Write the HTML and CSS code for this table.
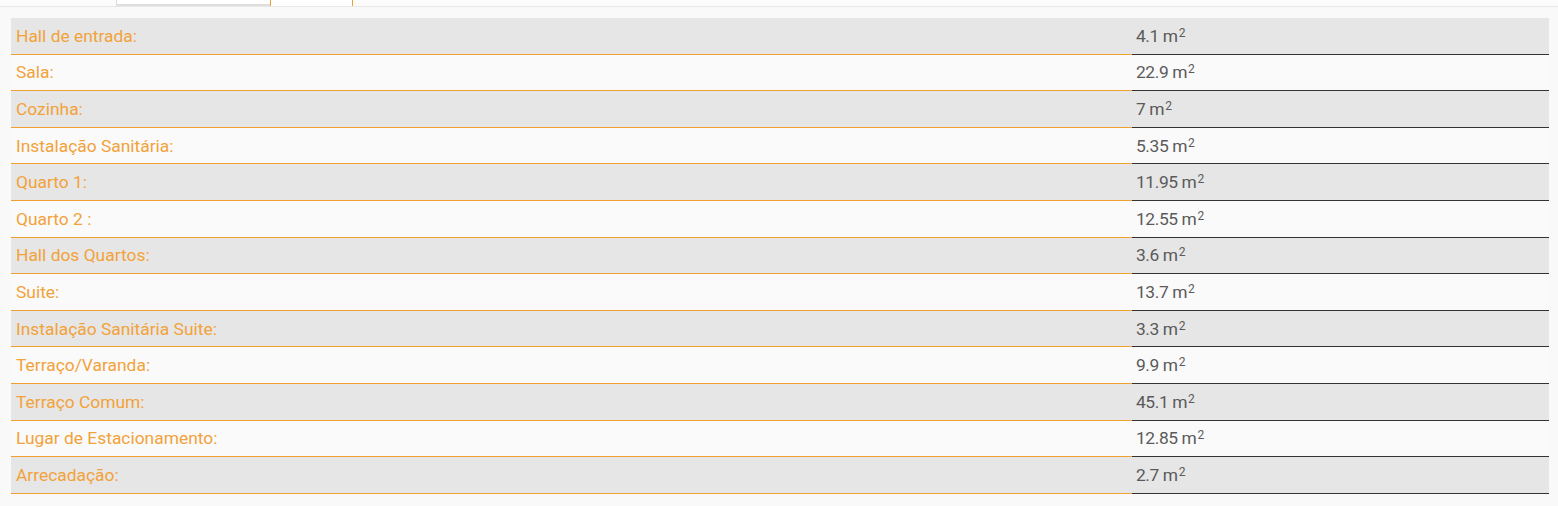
FILE: index.html
```html
<!DOCTYPE html>
<html lang="pt">
<head>
<meta charset="utf-8">
<title>Áreas</title>
<link rel="stylesheet" href="styles.css">
</head>
<body>
<div class="tabs">
  <div class="tab-spacer"></div>
  <div class="tab tab-active"></div>
  <div class="tab tab-orange"></div>
</div>
<div class="areas">
  <div class="row odd"><div class="name">Hall de entrada:</div><div class="val">4.1 m<sup>2</sup></div></div>
  <div class="row"><div class="name">Sala:</div><div class="val">22.9 m<sup>2</sup></div></div>
  <div class="row odd"><div class="name">Cozinha:</div><div class="val">7 m<sup>2</sup></div></div>
  <div class="row"><div class="name">Instalação Sanitária:</div><div class="val">5.35 m<sup>2</sup></div></div>
  <div class="row odd"><div class="name">Quarto 1:</div><div class="val">11.95 m<sup>2</sup></div></div>
  <div class="row"><div class="name">Quarto 2 :</div><div class="val">12.55 m<sup>2</sup></div></div>
  <div class="row odd"><div class="name">Hall dos Quartos:</div><div class="val">3.6 m<sup>2</sup></div></div>
  <div class="row"><div class="name">Suite:</div><div class="val">13.7 m<sup>2</sup></div></div>
  <div class="row odd"><div class="name">Instalação Sanitária Suite:</div><div class="val">3.3 m<sup>2</sup></div></div>
  <div class="row"><div class="name">Terraço/Varanda:</div><div class="val">9.9 m<sup>2</sup></div></div>
  <div class="row odd"><div class="name">Terraço Comum:</div><div class="val">45.1 m<sup>2</sup></div></div>
  <div class="row"><div class="name">Lugar de Estacionamento:</div><div class="val">12.85 m<sup>2</sup></div></div>
  <div class="row odd"><div class="name">Arrecadação:</div><div class="val">2.7 m<sup>2</sup></div></div>
</div>
</body>
</html>
```
FILE: styles.css
```css
html, body {
  margin: 0;
  padding: 0;
  background: #f9f9f9;
  font-family: Roboto, "Liberation Sans", sans-serif;
}
.tabs {
  display: flex;
  height: 6px;
  border-bottom: 1px solid #e8e8e8;
  background: #fcfcfc;
}
.tab-spacer {
  width: 116px;
}
.tab {
  box-sizing: border-box;
  height: 6px;
}
.tab-active {
  width: 154px;
  background: #fff;
  border-left: 1px solid #dcdcdc;
  border-bottom: 2px solid #dedede;
}
.tab-orange {
  width: 83px;
  background: #fff;
  border-left: 1px solid #f0a030;
  border-right: 1px solid #f0a030;
}
.areas {
  margin: 11px 9px 0 11px;
}
.row {
  display: flex;
  height: 36.6px;
  background: #fafafa;
}
.row.odd {
  background: #e6e6e6;
}
.name, .val {
  box-sizing: border-box;
  display: flex;
  align-items: center;
  font-size: 17.4px;
  font-weight: 400;
}
.name {
  width: 1121px;
  padding-left: 5px;
  color: #f2a23a;
  border-bottom: 1px solid #f0a030;
}
.val {
  flex: 1;
  padding-left: 4px;
  color: #5a5a5a;
  border-bottom: 1px solid #333;
  letter-spacing: -0.4px;
}
.val sup {
  font-size: 12px;
  line-height: 0;
  position: relative;
  top: -3px;
  margin-left: 1px;
}
```
